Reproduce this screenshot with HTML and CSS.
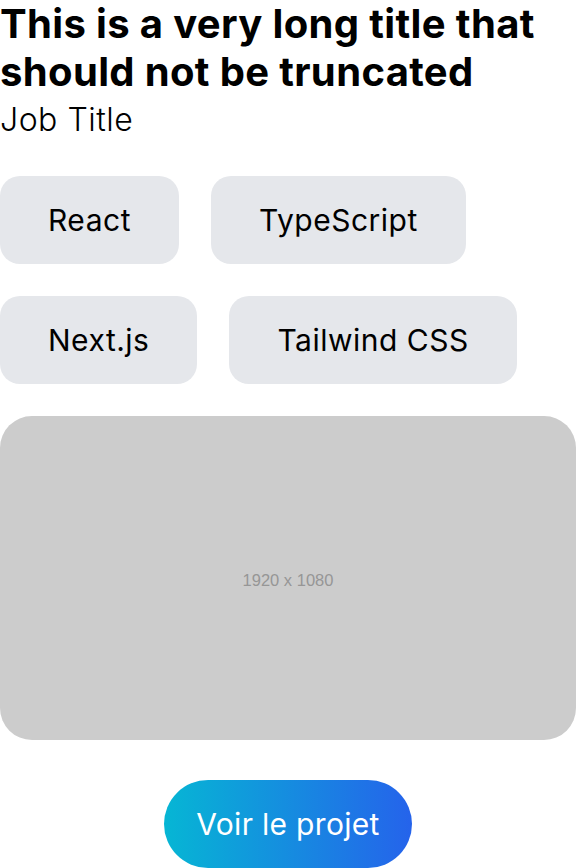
FILE: index.html
```html
<!DOCTYPE html>
<html lang="fr">
<head>
<meta charset="utf-8">
<link rel="stylesheet" href="styles.css">
</head>
<body>
<main class="card">
  <h1 class="title">This is a very long title that should not be truncated</h1>
  <p class="job">Job Title</p>
  <div class="tags">
    <span class="tag">React</span>
    <span class="tag">TypeScript</span>
    <span class="tag">Next.js</span>
    <span class="tag">Tailwind CSS</span>
  </div>
  <div class="image"><span>1920 x 1080</span></div>
  <div class="actions"><a class="btn" href="#">Voir le projet</a></div>
</main>
</body>
</html>
```
FILE: styles.css
```css
* { box-sizing: border-box; }
html, body { margin: 0; padding: 0; background: #fff; }
body { font-family: Inter, "Noto Sans", sans-serif; color: #000; }
.card { width: 576px; display: flex; flex-direction: column; }
.title { margin: 0; font-size: 40px; line-height: 48px; font-weight: 700; letter-spacing: 0.35px; }
.job { margin: 0; font-size: 32px; line-height: 48px; font-weight: 300; letter-spacing: 0.5px; }
.tags { display: flex; flex-wrap: wrap; gap: 32px; margin-top: 32px; width: 560px; }
.tag { background: #e5e7eb; border-radius: 20px; padding: 24px 48px; font-size: 30px; line-height: 40px; font-weight: 400; letter-spacing: 0.5px; }
.image { margin-top: 32px; width: 576px; height: 324px; background: #cccccc; border-radius: 32px; display: flex; align-items: center; justify-content: center; }
.image span { font-family: "Liberation Sans", Arial, sans-serif; font-size: 16.5px; color: #969696; padding-top: 4px; }
.actions { display: flex; justify-content: center; margin-top: 40px; }
.btn { display: inline-block; padding: 24px 32px; border-radius: 9999px; background: linear-gradient(to right, #06b6d4, #2563eb); color: #fff; text-decoration: none; font-size: 30px; line-height: 40px; font-weight: 400; letter-spacing: 0.3px; }
```
